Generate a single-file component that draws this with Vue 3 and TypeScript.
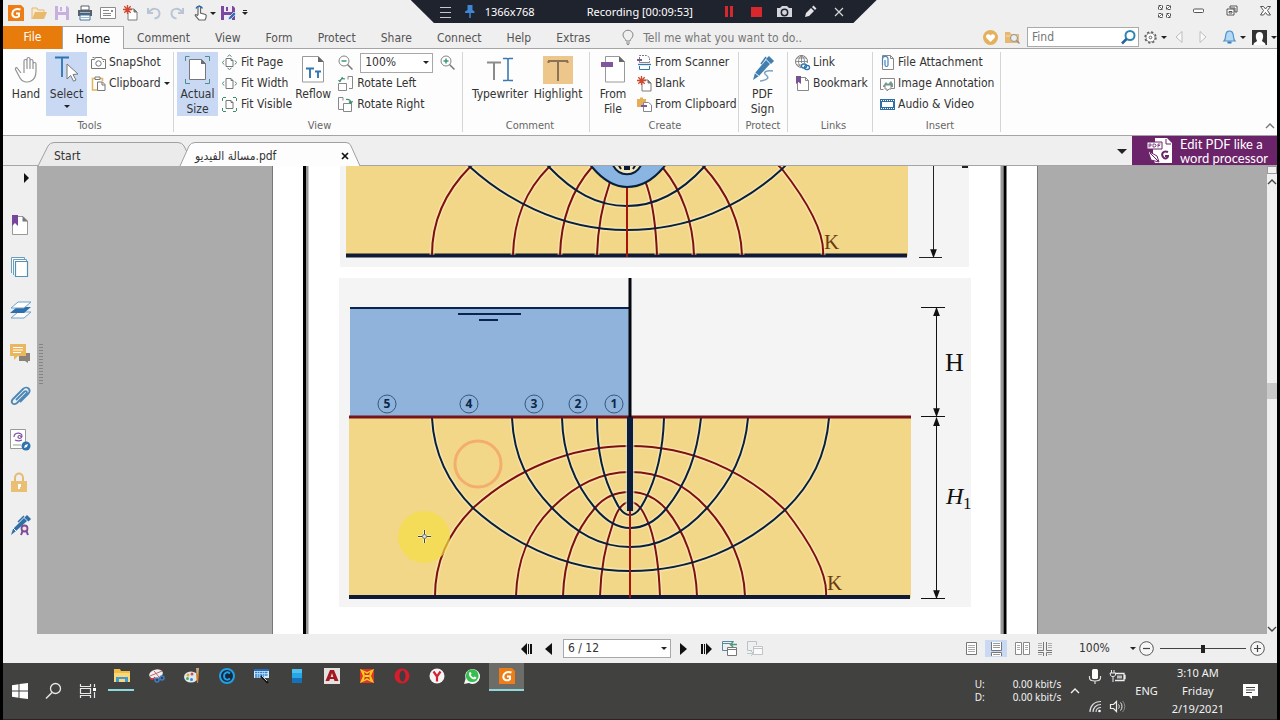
<script setup lang="ts">
import { h, ref } from 'vue'

const icons: Record<string, string> = {
  logo: '<path d="M0 0h13l3 3v13H0z" fill="#ee7d16"/><path d="M12.500 4.500C8 3 4.500 5 4.300 8.500S8 13.500 11 11.200V8.500H8" fill="none" stroke="#fff" stroke-width="2"/>',
  open: '<path d="M1 14V3h5l1 2h6v3" fill="#f7ead0" stroke="#e0b878"/><path d="M1 14l3-7h12l-3 7z" fill="#e9b96e"/>',
  save: '<path d="M1 1h12l2 2v12H1z" fill="#c6b0dc"/><path d="M4 1h8v6H4zM4 10h8v5H4z" fill="#f3eef8"/><path d="M6 2h2v4H6z" fill="#c6b0dc"/>',
  print: '<path d="M4 1h8v4H4z" fill="#fff" stroke="#58606a"/><path d="M1 5h14v6H1z" fill="#58606a"/><path d="M3 10h10v5H3z" fill="#fff" stroke="#3c75a8"/><path d="M4 12.500h8M3 7.500h10" stroke="#9eb7cc"/>',
  mail: '<path d="M.5 2.500h15v11H.5z" fill="#fff" stroke="#8b8b8b"/><path d="M3 5.500h6M3 8.500h8M3 10.500h8" stroke="#888"/><path d="M11 5h2v2h-2z" fill="#888"/>',
  newdoc: '<path d="M5 4h6l3 3v8H5z" fill="#fff" stroke="#7c7c7c"/><path d="M11 4v3h3" fill="#777" stroke="#777"/><path d="M4.500 0v9M0 4.500h9M1.300 1.300l6.400 6.400M7.700 1.300L1.300 7.700" stroke="#d0482f" stroke-width="1.300"/>',
  undo: '<path d="M2 3v5h5M2.500 8C6 2 13 3 13.500 8c.2 3-2 5-5 5.500" fill="none" stroke="#b9c5d4" stroke-width="2"/>',
  redo: '<path d="M14 3v5H9M13.500 8C10 2 3 3 2.500 8c-.2 3 2 5 5 5.500" fill="none" stroke="#b9c5d4" stroke-width="2"/>',
  touch: '<path d="M6 10V2.500c0-1.800 2.500-1.800 2.500 0V8l5 1.500c1 .5 1 1.500.5 3L13 15H7l-3.500-4c-1-1.500 1-2 2.500 0" fill="#fff" stroke="#666" stroke-width="1.200"/><path d="M4 3.500a3.500 3.500 0 0 1 6.500 0" fill="none" stroke="#2d6ea8" stroke-width="1.500"/>',
  saveedit: '<path d="M1 1h12l2 2v12H1z" fill="#7b4aa0"/><path d="M4 1h8v6H4zM4 10h8v5H4z" fill="#f0eaf5"/><path d="M6 2h2v4H6z" fill="#7b4aa0"/><path d="M8 15l1-3 5-5 2 2-5 5z" fill="#2f73b5" stroke="#fff" stroke-width=".6"/>',
  menu: '<path d="M0 1.500h11M0 6.500h11M0 11.500h11" stroke="#c8c9cc" stroke-width="1"/>',
  pin: '<path d="M2.500 0h5v5l2 1.500V8H0V6.500L2.500 5z" fill="#3d87d4"/><path d="M5 8v5" stroke="#3d87d4" stroke-width="1.500"/>',
  camera: '<path d="M0 3h3l2-2h5l2 2h3v9H0z" fill="#d5d5de"/><circle cx="7.500" cy="7.500" r="3.200" fill="#d5d5de" stroke="#20242f" stroke-width="1.500"/>',
  pencil: '<path d="M1 12l1-4 5-5 3 3-5 5zM8 2l1.500-1.500 3 3L11 5z" fill="#e3e3e8"/>',
  close: '<path d="M1 1l8 8M9 1L1 9" stroke="#d6d6da" stroke-width="1.200"/>',
  tabx: '<path d="M1 1l6 6M7 1L1 7" stroke="#111" stroke-width="1.700"/>',
  expand: '<path d="M.5 .5h4v4h-4zM8.500 .5h4v4h-4zM.5 8.500h4v4h-4zM8.500 8.500h4v4h-4z" fill="#fff" stroke="#555" stroke-dasharray="3 1"/><path d="M1 1l3 3M12 1L9 4M1 12l3-3M12 12L9 9" stroke="#777"/>',
  minimize: '<rect x=".5" y="1" width="10" height="3.500" rx="1" fill="#fff" stroke="#555"/>',
  restore: '<path d="M4 1h7v6H9V3H4z" fill="#fff" stroke="#555"/><path d="M1 4h7v6H1z" fill="#fff" stroke="#555"/><path d="M3 6.500h3v1.500H3z" fill="none" stroke="#555"/>',
  winclose: '<path d="M.5 .5h3L5.500 3l2-2.500h3L7.500 4.500l3 4.500h-3l-2-2.500-2 2.500h-3l3-4.500z" fill="#fff" stroke="#555"/>',
  bulb: '<path d="M4 10c0-2-3-3-3-6a4.700 4.500 0 0 1 10 0c0 3-3 4-3 6zM4 12h4M5 13.500h2" fill="none" stroke="#858585"/>',
  heart: '<circle cx="7.500" cy="7.500" r="7.500" fill="#e5b05c"/><path d="M7.500 12L3.500 8c-2-3 2-5.500 4-2.500 2-3 6-.5 4 2.500z" fill="#fff"/>',
  foldersearch: '<path d="M0 2h5l1 2h8v9H0z" fill="#e8b871"/><path d="M1 6h12" stroke="#f6dfb8"/><circle cx="9" cy="8" r="3.500" fill="#e9eef0" stroke="#98908a"/><path d="M11.500 10.500l3 3" stroke="#98908a" stroke-width="1.500"/>',
  findglass: '<circle cx="9" cy="5.500" r="4.500" fill="none" stroke="#2b86b4" stroke-width="2"/><path d="M5.500 9L1 13.500" stroke="#2b5f9e" stroke-width="2.500"/>',
  gear: '<circle cx="6.500" cy="6.500" r="5.300" fill="#fff" stroke="#606060" stroke-width="1.800" stroke-dasharray="2.160 2"/><circle cx="6.500" cy="6.500" r="4.500" fill="#fff" stroke="#808080"/><circle cx="6.500" cy="6.500" r="1.300" fill="none" stroke="#606060"/>',
  triLeft: '<path d="M7 .5v11L1 6z" fill="#fafafa" stroke="#bdbdbd"/>',
  triRight: '<path d="M1 .5v11L7 6z" fill="#fafafa" stroke="#bdbdbd"/>',
  bell: '<path d="M1 11c2-2 1-4 2-7 .7-4 6.300-4 7 0 1 3 0 5 2 7z" fill="#b5d8f3" stroke="#4e94d0" stroke-width="1.200"/><path d="M4.500 12.500h4" stroke="#3878b8" stroke-width="2"/>',
  user: '<path d="M0 0h15v15H0z" fill="#333"/><path d="M1.500 15c0-3 3-2.500 3.500-4.500C3 7 3.500 2 7.500 2S12 7 10 10.500c.5 2 3.500 1.500 3.500 4.500z" fill="#fff"/>',
  hand: '<path d="M6 17L2.500 12.500c-1-1.500-2.500-.5-2 1L5 22c2 4 7 5 11 3 4-2 5-6 5-10V8c0-2-3-2-3 0v5V5c0-2-3-2-3 0v8V3c0-2-3-2-3 0v10V5c0-2-3-2-3 0v12" transform="translate(1 0)" fill="#fff" stroke="#929292" stroke-width="1.200"/>',
  select: '<path d="M0 1.500h14M7 1v20" stroke="#2c74b4" stroke-width="1.800" fill="none"/><path d="M12 8l11 10-5 .5 3 5.500-2.500 1.200-2.800-5.700-3.700 3.500z" fill="#fff" stroke="#777"/>',
  snapshot: '<path d="M.5 4.500h3l1-2h6l1 2h3v9H.5z" fill="#fff" stroke="#777"/><circle cx="7.500" cy="8.500" r="2.700" fill="none" stroke="#777"/><path d="M1.500 2.500h2M12 6.500h1" stroke="#777"/>',
  clipboard: '<path d="M8 14H1.500V2.500h10V5" fill="#fff" stroke="#e3b45b" stroke-width="1.500"/><path d="M4 3.500V1h5v2.500z" fill="#fff" stroke="#777"/><path d="M6.500 6h5l2.500 2.500V14.500H6.500zM11 6v3h3" fill="#fff" stroke="#777"/>',
  actual: '<path d="M.5 5V.5h4M20 .5h4.500V5M24.500 23v4.500H20M5 27.500H.5V23" fill="none" stroke="#4b8f8c"/><path d="M4.500 3.500h12l4 4v16h-16z" fill="#fff" stroke="#777"/><path d="M16 3l5 5h-5z" fill="#6e6e6e"/>',
  fitpage: '<path d="M4 3.500h5l2 2v6H4zM9 3.500v2h2" fill="#fff" stroke="#777"/><path d="M5.500 1.500l2-1.500 2 1.500M5.500 13l2 1.500 2-1.500M2 5.500L.5 7.500 2 9.500M13 5.500l1.500 2-1.500 2" fill="none" stroke="#3f8f6b"/>',
  fitwidth: '<path d="M4 2.500h5l2 2v8H4zM9 2.500v2h2" fill="#fff" stroke="#777"/><path d="M2 5.500L.5 7.500 2 9.500M13 5.500l1.500 2-1.500 2" fill="none" stroke="#3f8f6b"/>',
  fitvisible: '<path d="M4 3.500h5l2 2v6H4zM9 3.500v2h2" fill="#fff" stroke="#777"/><path d="M.5 4V.5H4M11 .5h3.500V4M14.500 11v3.500H11M4 14.500H.5V11" fill="none" stroke="#3f8f6b" stroke-dasharray="3 1"/>',
  reflow: '<path d="M.5 .5H16l5.500 5.500v20H.5z" fill="#fff" stroke="#999"/><path d="M16 0l6 6h-6z" fill="#666"/><path d="M4 12.500h8M8 12v10M13 15.500h6M16 15v7" stroke="#3577ad" stroke-width="1.900"/>',
  zoomout: '<circle cx="6" cy="6" r="5" fill="#fff" stroke="#858585"/><path d="M9.500 9.500l5 5" stroke="#777" stroke-width="1.500"/><path d="M3.500 6h5" stroke="#3d967c" stroke-width="1.500"/>',
  zoomin: '<circle cx="6" cy="6" r="5" fill="#fff" stroke="#858585"/><path d="M9.500 9.500l5 5" stroke="#777" stroke-width="1.500"/><path d="M3.500 6h5M6 3.500v5" stroke="#3d967c" stroke-width="1.500"/>',
  rotleft: '<path d="M.5 7.500h8v7h-8z" fill="#fff" stroke="#888"/><path d="M10 3.500V.5h4.500v12H11" fill="none" stroke="#888"/><path d="M2 6C2 3 4 2 7 3M4.500 1L2 5.500M2 6L.5 4" fill="none" stroke="#3f8f6b" stroke-width="1.200"/>',
  rotright: '<path d="M5 12.500H.5V.5H5v3" fill="none" stroke="#888"/><path d="M5.500 6.500h8v8h-8z" fill="#fff" stroke="#888"/><path d="M8 2.500c3-.5 5 .5 5 3.500M11 4.500l2 2 1.500-2.500" fill="none" stroke="#3f8f6b" stroke-width="1.200"/>',
  typewriter: '<path d="M0 6.500h14M7 6v18" stroke="#8b8b8b" stroke-width="2"/><path d="M16 2.500h4c1 0 1 1 1 1 0-1 1-1 1-1h4M16 24.500h4c1 0 1-1 1-1 0 1 1 1 1 1h4M21 3v21" fill="none" stroke="#3a7ab0" stroke-width="1.600"/>',
  highlight: '<path d="M0 0h30v28H0z" fill="#ecc68a"/><path d="M5 5h20M15 5v20M5.500 5v2M24.500 5v2" stroke="#8a7257" stroke-width="2" fill="none"/>',
  fromfile: '<path d="M4.500 .5H18l5.500 5.500v20h-19z" fill="#fff" stroke="#999"/><path d="M18 0l6 6h-6z" fill="#666"/><path d="M0 6h12v5H0z" fill="#8154a0"/>',
  scanner: '<path d="M2.500 4V.5h7l3 2V5" fill="none" stroke="#777" stroke-dasharray="2 1"/><path d="M0 4h5v2H0z" fill="#8154a0"/><path d="M2.500 6v1.500h10V6" fill="none" stroke="#888"/><path d="M1 9.500h13" stroke="#3577ad" stroke-width="1.300"/><path d="M2.500 11v3.500h10V11" fill="none" stroke="#3577ad"/>',
  fromclip: '<path d="M0 2h3V.5h3V2h3v8H0z" fill="#e5ae57"/><path d="M6.500 5.500h5l3 2.500v6.500h-8z" fill="#fff" stroke="#888"/><path d="M4 8h6v2H4z" fill="#8154a0"/>',
  pdfsign: '<path d="M2 24l2-7L15 4l4 4L8 20z" fill="#417fb1"/><path d="M16 3l2-2 4 4-2 2zM10 8L15 1" stroke="#417fb1" fill="#417fb1" stroke-width="1.500"/><path d="M3 16l6 5" stroke="#fff"/><path d="M22 15c-6-1-11 1-7 4s1 5-6 6" fill="none" stroke="#79a2c7" stroke-width="1.500"/>',
  link: '<circle cx="6.500" cy="6.500" r="6" fill="#fff" stroke="#777"/><path d="M.5 6.500h12M6.500 .5v12M2 3h9M2 10h9M6.500 .5c-4 3-4 9 0 12M6.500 .5c4 3 4 9 0 12" fill="none" stroke="#777" stroke-width=".8"/><path d="M6 8h9v7H6z" fill="#fff"/><rect x="6.500" y="9" width="5" height="4" rx="2" fill="none" stroke="#2f73ae" stroke-width="1.300"/><rect x="9.500" y="10.500" width="5" height="4" rx="2" fill="none" stroke="#2f73ae" stroke-width="1.300"/>',
  bookmark: '<path d="M2.500 1.500h8l3 3v10h-11zM10.500 1.500v3h3" fill="#fff" stroke="#888"/><path d="M1 0h5v8L3.500 6 1 8z" fill="#795092"/>',
  fileatt: '<path d="M2.500 .5h8l3 3v11h-11zM10.500 .5v3h3" fill="#fff" stroke="#888"/><path d="M5 5v5c0 2 3 2 3 0V4C8 .5 2.500 .5 2.500 4v6" fill="none" stroke="#4783b5" stroke-width="1.200"/>',
  imgatt: '<path d="M.5 2.500h14v10H9M.5 2.500v11h3" fill="#fff" stroke="#888"/><path d="M3 10l3-4 2 2 3-3 2 3v3H3z" fill="#6aa08a"/><path d="M5 9h6v4H9l-2 2v-2H5z" fill="#fff" stroke="#888"/>',
  video: '<path d="M0 2h15v11H0z" fill="#2f6da5"/><path d="M2 5h11v5H2z" fill="#fff"/><path d="M1 3.500h13M1 11.500h13" stroke="#fff" stroke-dasharray="1 1"/>',
  chevup: '<path d="M1 5l4-4 4 4" fill="none" stroke="currentColor" stroke-width="1.400"/>',
  chevdown: '<path d="M1 1l4 4 4-4" fill="none" stroke="currentColor" stroke-width="1.400"/>',
  promo: '<path d="M8 0h12l5 5v20H8l-2-4V9H8z" fill="#fff"/><path d="M0 4h15v7H0z" fill="#fff" stroke="#6b2469"/><path d="M19 1v5h5" fill="none" stroke="#6b2469"/><path d="M2 9.500V6h2v2H2M6 6h2l1 1v1L8 9H6zM11 9.500V6h2.500M11 7.500h2" fill="none" stroke="#6b2469" stroke-width=".8"/><path d="M21 14c-5-2-7 2-5 5s5 1 5-1h-3" fill="none" stroke="#6b2469" stroke-width="2"/><path d="M1 13l9 5 2 6-8-2z" fill="#fff" stroke="#6b2469"/><path d="M3 15l8 8" stroke="#6b2469"/>',
  sbBookmark: '<path d="M2.500 2.500H13L17.500 7v13.500h-15z" fill="#fff" stroke="#999"/><path d="M12.500 2l5.500 5.500h-5.500z" fill="#777"/><path d="M2 1h6v11L5 9l-3 3z" fill="#77469c"/>',
  sbPages: '<path d="M1.500 16V.5h13v2M3.500 18V2.500h13v2" fill="#fff" stroke="#6d9ebb"/><path d="M5.500 4.500h12v15h-12z" fill="#fff" stroke="#5590b4" stroke-width="1.200"/>',
  sbLayers: '<path d="M1 18l7-6h13l-7 6z" fill="#fff" stroke="#6fa0c8"/><path d="M0 13l7-6h14l-7 6z" fill="#2d6fac"/><path d="M1 8l7-6h13l-7 6z" fill="#fff" stroke="#6fa0c8"/>',
  sbComment: '<path d="M9 10h11v8h-2v2l-3-2H9z" fill="#8a8178"/><path d="M0 1h16v12H8l-4 4v-4H0z" fill="#eab75e"/><path d="M3 4.500h10M3 7h10M3 9.500h8" stroke="#fff"/>',
  sbClip: '<path d="M6 14l8-8c2-2 4 0 2 2l-9 9c-4 3-7-1-4-4L13 3c4-4 9 1 5 5l-8 8" fill="none" stroke="#4b87b8" stroke-width="1.800"/>',
  sbSign: '<path d="M.5 .5h15v19H.5z" fill="#fff" stroke="#999"/><path d="M4 8c0-5 8-5 8-1 0 3-4 3-4 1s3-2 3 0M5 11c2 1 5 1 7 0" fill="none" stroke="#8254a4" stroke-width="1.200"/><path d="M3 15h8v2H3z" fill="#c5d3c5"/><circle cx="16" cy="17" r="4.500" fill="#2f73ae"/><path d="M14 19l1-3 3-1-1 3z" fill="#fff"/>',
  sbLock: '<path d="M5 10V6c0-6 8-6 8 0v4" fill="none" stroke="#e5bb74" stroke-width="2"/><path d="M1 9h16v11H1z" fill="#eabf74"/><path d="M8 12h3v3H10v2H8z" fill="#fff"/>',
  sbPen: '<path d="M1 20l2-6L14 3l3 3L6 16z" fill="#2f6fa9"/><path d="M15 3l2-2 3 3-2 2M8 7l6-6" stroke="#2f6fa9" fill="#2f6fa9" stroke-width="1.500"/><path d="M3 13l4 4" stroke="#fff"/><path d="M11 20l2-5M18 20l-2-5" stroke="#7b4a9b" stroke-width="2"/><circle cx="14.500" cy="13.500" r="3" fill="#f1e6d4" stroke="#7b4a9b" stroke-width="1.800"/>',
  first: '<path d="M6 0v12L0 6zM7 1h1v10H7zM9 1h2v10H9z" fill="#111"/>',
  prev: '<path d="M7 0v12L0 6z" fill="#111"/>',
  next: '<path d="M0 0v12l7-6z" fill="#111"/>',
  last: '<path d="M5 0v12l6-6zM3 1h1v10H3zM0 1h2v10H0z" fill="#111"/>',
  navBack: '<path d="M5 9.500H.5v-9h11V1M.5 2.500h8" fill="none" stroke="#5d86a0"/><path d="M5.500 6.500h9v8h-9zM5.500 8.500h9" fill="#fff" stroke="#777"/><path d="M15 3.500H9M11 1L8.500 3.500 11 6" fill="none" stroke="#4a9a80" stroke-width="1.500"/>',
  navFwd: '<path d="M5 9.500H.5v-9h9V4" fill="none" stroke="#b9c3ca"/><path d="M6.500 5.500h9v8h-9zM6.500 7.500h9" fill="#fafafa" stroke="#c0c4c8"/><path d="M0 12.500h6M4 10l2.500 2.500L4 15" fill="none" stroke="#b0cfc0"/>',
  vSingle: '<path d="M.5 .5h10v12H.5z" fill="#fff" stroke="#777"/><path d="M2 3.500h7M2 5.500h7M2 7.500h7M2 9.500h7" stroke="#aaa"/>',
  vCont: '<path d="M.5 0v8.500h10V0M.5 14v-3.500h10V14" fill="#fff" stroke="#777"/><path d="M2 1.500h7M2 3.500h7M2 5.500h7M2 12.500h7" stroke="#999"/>',
  vFacing: '<path d="M.5 .5h6v12h-6zM8.500 .5h6v12h-6z" fill="#fff" stroke="#888"/><path d="M2 3.500h3M2 5.500h3M2 7.500h3M10 3.500h3M10 5.500h3M10 7.500h3" stroke="#aaa"/>',
  vContFacing: '<path d="M0 8.500h5.500V0M14 8.500H8.500V0M0 10.500h5.500V14M14 10.500H8.500V14" fill="none" stroke="#777"/><path d="M0 1.500h4M0 3.500h4M0 5.500h4M10 1.500h4M10 3.500h4M10 5.500h4M0 12.500h4M10 12.500h4" stroke="#b0b0b0"/>',
  minusC: '<circle cx="7.500" cy="7.500" r="6.800" fill="#f6f6f6" stroke="#555"/><path d="M4 7.500h7" stroke="#444" stroke-width="1.200"/>',
  plusC: '<circle cx="7.500" cy="7.500" r="6.800" fill="#f6f6f6" stroke="#555"/><path d="M4 7.500h7M7.500 4v7" stroke="#444" stroke-width="1.200"/>',
  windows: '<path d="M0 2.200l6.500-1v6.300H0zM7.500 1L16 0v7.500H7.500zM0 8.500h6.500v6.300l-6.500-1zM7.500 8.500H16V16l-8.500-1z" fill="#fff"/>',
  search: '<circle cx="9.500" cy="5.500" r="5" fill="none" stroke="#e8e8e8" stroke-width="1.300"/><path d="M6 9.500L0 15.500" stroke="#e8e8e8" stroke-width="1.500"/>',
  taskview: '<path d="M.5 0v2.500h10V0M.5 14v-2.500h10V14M.5 4.500h10v5H.5zM14.500 0v3M14.500 8v6" fill="none" stroke="#e8e8e8" stroke-width="1.200"/><path d="M13 4h3v3h-3z" fill="#fff"/>',
  explorer: '<path d="M0 1h6l1 2h9v11H0z" fill="#f1bd45"/><path d="M0 5h16v9H0z" fill="#fbd775"/><path d="M2 14V9h12v5h-3v-3H5v3z" fill="#3c9ad8"/>',
  snip: '<ellipse cx="7" cy="6" rx="7" ry="4.500" transform="rotate(-15 7 6)" fill="#eff0f2"/><path d="M1 8l12-5M5 3l5 6" stroke="#c86068" /><circle cx="8" cy="12" r="2" fill="none" stroke="#3d7fc5" stroke-width="1.500"/><circle cx="13" cy="10" r="2" fill="none" stroke="#3d7fc5" stroke-width="1.500"/><path d="M1 10c2 2 4 1 5-1" fill="none" stroke="#d13d45" stroke-width="1.500"/>',
  paint: '<ellipse cx="7" cy="9" rx="7" ry="5.500" fill="#dce9ed"/><circle cx="4" cy="7" r="1.500" fill="#e3a53f"/><circle cx="8" cy="6" r="1.500" fill="#d84e40"/><circle cx="3.500" cy="10.500" r="1.500" fill="#56a65a"/><circle cx="7.500" cy="11.500" r="1.500" fill="#3b83cc"/><path d="M12 6l1 9h1l1-9z" fill="#d67b25"/><path d="M12 0h3l-.5 6h-2z" fill="#c8a67a"/>',
  cee: '<circle cx="8" cy="8" r="7" fill="#16283a" stroke="#1fa0e8" stroke-width="2"/><path d="M11 5.500C8 3 5 5 5 8s3 5 6 2.500" fill="none" stroke="#1fa0e8" stroke-width="2"/>',
  keyboard: '<path d="M0 1h15v9H0z" fill="#d5e9f6"/><path d="M0 1h15v2H0z" fill="#1f6cc0"/><path d="M1 4.500h13M1 7h13M1 9h9" stroke="#2f85d1" stroke-width="1.500" stroke-dasharray="2 .5"/><path d="M7 8l7 7" stroke="#111" stroke-width="2"/><path d="M8 8l5 5" stroke="#ccc"/>',
  phone: '<path d="M3 1h10v14H3z" fill="#28a5e5"/><path d="M3 1h10v4H3z" fill="#4cc0f0"/><path d="M3 10h10v5H3z" fill="#1672b8"/>',
  autocad: '<path d="M0 0h16v16H0z" fill="#e5e1e1"/><path d="M1.500 13L6 2h4l4.500 11h-4l-.7-2H6l-.8 2z" fill="#a51820"/><path d="M8 5l1.300 4H6.700z" fill="#e5e1e1"/>',
  star: '<path d="M1 1h14v14H1z" fill="#e0342b"/><path d="M1 1l7 3 7-3-3 7 3 7-7-3-7 3 3-7z" fill="#f8c91b"/><path d="M5 4l3 2 3-2-1 4 1 4-3-2-3 2 1-4z" fill="#d33023"/><path d="M6 8h4" stroke="#ffd52b" stroke-width="2"/>',
  opera: '<circle cx="8" cy="8" r="7.500" fill="#d71c2b"/><ellipse cx="8.500" cy="8" rx="3" ry="5.500" fill="#3d3d3d"/>',
  yandex: '<circle cx="8" cy="8" r="7.500" fill="#f5f5f5"/><path d="M4.500 3.500L8 8.500l3.500-5M8 8v5.500" fill="none" stroke="#d42430" stroke-width="2.200"/>',
  whatsapp: '<path d="M0 16l1.500-5A7.500 7.500 0 1 1 5 15z" fill="#f5f5f5"/><circle cx="8.200" cy="7.700" r="6.400" fill="#35bf4f"/><path d="M5 5c1-2 2-1 2.500.7L6.800 7c.7 1.300 1.500 2 2.700 2.500l1-1c2 .5 2.500 1.300 1 2.500C8.500 12.500 4 8 5 5z" fill="#fff"/>',
  mic: '<rect x="3" y="0" width="6" height="10" rx="1.500" fill="#fff"/><path d="M.5 7v2c0 4 11 4 11 0V7M6 12v3" fill="none" stroke="#ddd" stroke-width="1.200"/>',
  battery: '<path d="M5 3.500h9v7H5M14 5.500h1v3h-1" fill="none" stroke="#eee" stroke-width="1.300"/><path d="M7 5.500h5v3H7z" fill="#bbb"/><path d="M1.500 0v3M4 0v3M0 3h5.500v2C5 7 .5 7 .5 5zM3 6v6" fill="none" stroke="#eee"/>',
  wifi: '<circle cx="10.500" cy="11" r="1.300" fill="#fff"/><path d="M1 12C1 6 5 1.500 12 1.500M4 12c0-4 3-7.500 8-7.500M7 12c0-3 2-4.500 5-4.500" fill="none" stroke="#ddd" stroke-width="1.200"/>',
  speaker: '<path d="M.5 4.500h3l3-3v10l-3-3h-3z" fill="none" stroke="#eee" stroke-width="1.200"/><path d="M8.500 4.500c1 1 1 3 0 4M10.500 2.500c2 2 2 6 0 8" fill="none" stroke="#eee"/><path d="M12.500 1c3 3 3 8 0 11" fill="none" stroke="#888"/>',
  notify: '<path d="M0 0h15v12H9v3l-3-3H0z" fill="#fff"/><path d="M3 3.500h9M3 6h9M3 8.500h6" stroke="#444"/>',
}

const Icon = (p: { name: string; w?: number; h?: number }) => {
  const w = p.w ?? 16
  const hh = p.h ?? w
  return h('svg', { width: w, height: hh, viewBox: `0 0 ${w} ${hh}`, 'aria-hidden': 'true', innerHTML: icons[p.name] })
}

const quick = [
  ['logo', 'Foxit'], ['open', 'Open'], ['save', 'Save'], ['print', 'Print'], ['mail', 'Email'],
  ['newdoc', 'New'], ['undo', 'Undo'], ['redo', 'Redo'], ['touch', 'Touch mode'],
]
const menus = ['Comment', 'View', 'Form', 'Protect', 'Share', 'Connect', 'Help', 'Extras']
const fits = [['fitpage', 'Fit Page'], ['fitwidth', 'Fit Width'], ['fitvisible', 'Fit Visible']]
const creates = [['scanner', 'From Scanner'], ['newdoc', 'Blank'], ['fromclip', 'From Clipboard']]
const links = [['link', 'Link'], ['bookmark', 'Bookmark']]
const inserts = [['fileatt', 'File Attachment'], ['imgatt', 'Image Annotation'], ['video', 'Audio & Video']]
const panels = [
  ['sbBookmark', 'Bookmarks'], ['sbPages', 'Pages'], ['sbLayers', 'Layers'], ['sbComment', 'Comments'],
  ['sbClip', 'Attachments'], ['sbSign', 'Signatures'], ['sbLock', 'Security'], ['sbPen', 'Digital signatures'],
]
const apps = [
  ['explorer', 'File Explorer'], ['snip', 'Snipping Tool'], ['paint', 'Paint'], ['cee', 'Browser'], ['keyboard', 'Keyboard'],
  ['phone', 'Phone'], ['autocad', 'AutoCAD'], ['star', 'Game'], ['opera', 'Opera'], ['yandex', 'Yandex'],
  ['whatsapp', 'WhatsApp'], ['logo', 'Foxit Reader'],
]
const labels = [
  { n: '5', x: 387 }, { n: '4', x: 469 }, { n: '3', x: 534 }, { n: '2', x: 578 }, { n: '1', x: 614 },
]
const flow = {
  outer: 'M432 418C434 455 449 484 473 508C505 537 560 571 630 571C692 571 745 547 785 510C812 484 826 455 829 418',
  middle: 'M512 418C514 458 528 483 552 508C576 533 600 547 630 547C660 547 686 531 707 508C732 480 745 453 748 418',
  inner: 'M562 418C563 455 574 483 595 508C606 521 617 528 630 528C644 528 655 522 666 509C687 483 697 455 701 418',
  core: 'M597 418C597 450 603 478 615 500C620 511 625 515 630 515C636 515 641 508 645 500C657 477 663 450 664 418',
}
const drops = [
  'M435 596C435 560 449 532 473 508C515 470 570 446 630 446C690 446 745 471 785 510C806 537 828 572 826 596',
  'M516 596C517 560 528 532 552 508C573 487 600 472 630 472C660 472 686 485 707 508C730 533 744 564 745 596',
  'M563 596C564 561 574 532 595 508C604 497 616 492 630 492C645 492 656 498 666 509C685 532 696 563 697 596',
  'M600 596C601 565 606 543 613 523C617 510 622 502 630 502C640 502 645 515 650 527C656 545 659 570 660 596',
]
const zoom = ref(50)
</script>

<template>
  <div class="screen">
    <header class="titlebar">
      <div class="quick">
        <button v-for="q in quick" :key="q[0]" :aria-label="q[1]"><Icon :name="q[0]" /></button>
        <i class="caret"></i>
        <button class="saveas" aria-label="Save as"><Icon name="saveedit" /></button>
        <i class="caret bar"></i>
      </div>
      <div class="recorder">
        <button aria-label="Menu"><Icon name="menu" :w="11" :h="12" /></button>
        <button class="pin" aria-label="Pin"><Icon name="pin" :w="10" :h="13" /></button>
        <span class="dim">1366x768</span>
        <span class="rec">Recording [00:09:53]</span>
        <button class="pause" aria-label="Pause"></button>
        <button class="stop" aria-label="Stop"></button>
        <button aria-label="Screenshot"><Icon name="camera" :w="15" :h="13" /></button>
        <button class="pen" aria-label="Draw"><Icon name="pencil" :w="13" :h="13" /></button>
        <button class="quit" aria-label="Close recorder"><Icon name="close" :w="10" /></button>
      </div>
      <div class="window">
        <button aria-label="Full screen"><Icon name="expand" :w="13" /></button>
        <button aria-label="Minimize"><Icon name="minimize" :w="11" :h="6" /></button>
        <button aria-label="Restore"><Icon name="restore" :w="12" /></button>
        <button aria-label="Close"><Icon name="winclose" :w="11" :h="10" /></button>
      </div>
    </header>

    <nav class="menubar">
      <button class="file">File</button>
      <button class="home">Home</button>
      <div class="menus">
        <button v-for="m in menus" :key="m">{{ m }}</button>
      </div>
      <button class="tell"><Icon name="bulb" :w="12" :h="15" />Tell me what you want to do..</button>
      <div class="tools">
        <button aria-label="Favourites"><Icon name="heart" :w="15" /></button>
        <button aria-label="Search folder"><Icon name="foldersearch" :w="15" /></button>
        <label class="find"><input type="text" placeholder="Find" aria-label="Find" /><Icon name="findglass" :w="15" /></label>
        <button aria-label="Settings"><Icon name="gear" :w="13" /></button>
        <i class="caret"></i>
        <button class="tri" aria-label="Previous result"><Icon name="triLeft" :w="8" :h="12" /></button>
        <button class="tri" aria-label="Next result"><Icon name="triRight" :w="8" :h="12" /></button>
        <button class="tri" aria-label="Notifications"><Icon name="bell" :w="13" :h="15" /></button>
        <i class="caret"></i>
        <button class="account" aria-label="Account"><Icon name="user" :w="15" /></button>
        <i class="caret"></i>
      </div>
    </nav>

    <section class="ribbon">
      <div class="group g-tools">
        <div class="body">
          <button class="big"><Icon name="hand" :w="24" :h="28" /><span>Hand</span></button>
          <button class="big on"><Icon name="select" :w="24" :h="28" /><span>Select</span><i class="caret"></i></button>
          <div class="rows">
            <button><Icon name="snapshot" :w="15" />SnapShot</button>
            <button><Icon name="clipboard" :w="15" />Clipboard<i class="caret"></i></button>
          </div>
        </div>
        <h2>Tools</h2>
      </div>
      <div class="group g-view">
        <div class="body">
          <button class="big on"><Icon name="actual" :w="25" :h="28" /><span>Actual<br />Size</span></button>
          <div class="rows">
            <button v-for="f in fits" :key="f[0]"><Icon :name="f[0]" :w="15" />{{ f[1] }}</button>
          </div>
          <button class="big reflow"><Icon name="reflow" :w="22" :h="28" /><span>Reflow</span></button>
          <div class="rows">
            <div class="zoomrow">
              <button aria-label="Zoom out"><Icon name="zoomout" :w="15" /></button>
              <span class="picker"><select aria-label="Zoom level"><option>100%</option></select><i class="caret"></i></span>
              <button aria-label="Zoom in"><Icon name="zoomin" :w="15" /></button>
            </div>
            <button><Icon name="rotleft" :w="15" />Rotate Left</button>
            <button><Icon name="rotright" :w="15" />Rotate Right</button>
          </div>
        </div>
        <h2>View</h2>
      </div>
      <div class="group g-comment">
        <div class="body">
          <button class="big"><Icon name="typewriter" :w="26" :h="28" /><span>Typewriter</span></button>
          <button class="big"><Icon name="highlight" :w="30" :h="28" /><span>Highlight</span></button>
        </div>
        <h2>Comment</h2>
      </div>
      <div class="group g-create">
        <div class="body">
          <button class="big"><Icon name="fromfile" :w="24" :h="28" /><span>From<br />File</span></button>
          <div class="rows">
            <button v-for="c in creates" :key="c[0]"><Icon :name="c[0]" :w="15" />{{ c[1] }}</button>
          </div>
        </div>
        <h2>Create</h2>
      </div>
      <div class="group g-protect">
        <div class="body">
          <button class="big"><Icon name="pdfsign" :w="24" :h="28" /><span>PDF<br />Sign</span></button>
        </div>
        <h2>Protect</h2>
      </div>
      <div class="group g-links">
        <div class="body">
          <div class="rows">
            <button v-for="l in links" :key="l[0]"><Icon :name="l[0]" :w="15" />{{ l[1] }}</button>
          </div>
        </div>
        <h2>Links</h2>
      </div>
      <div class="group g-insert">
        <div class="body">
          <div class="rows">
            <button v-for="n in inserts" :key="n[0]"><Icon :name="n[0]" :w="15" />{{ n[1] }}</button>
          </div>
        </div>
        <h2>Insert</h2>
      </div>
      <button class="collapse" aria-label="Collapse ribbon"><Icon name="chevup" :w="10" :h="6" /></button>
    </section>

    <div class="tabs">
      <div class="tab start">
        <svg width="156" height="24" viewBox="0 0 156 24"><path d="M0 24L10 4Q12 .5 16 .5H140Q144 .5 146 4L156 24" fill="#ebebeb" stroke="#a0a0a0" /></svg>
        <button>Start</button>
      </div>
      <div class="tab doc">
        <svg width="180" height="24" viewBox="0 0 180 24"><path d="M0 24L9 4Q11 .5 15 .5H166Q170 .5 171 4L180 24" fill="#fdfdfd" stroke="#a0a0a0" /></svg>
        <button>مسالة الفيديو.pdf</button>
        <button class="shut" aria-label="Close tab"><Icon name="tabx" :w="8" /></button>
      </div>
      <i class="caret wide"></i>
      <a class="promo" href="#"><Icon name="promo" :w="26" /><span>Edit PDF like a<br />word processor</span></a>
    </div>

    <main class="work">
      <aside class="side">
        <button class="arrow" aria-label="Expand panel"><i></i></button>
        <button v-for="p in panels" :key="p[0]" :aria-label="p[1]"><Icon :name="p[0]" :w="21" /></button>
      </aside>
      <div class="grip"></div>
      <div class="canvas">
        <svg class="page" width="766" height="468" viewBox="272 166 766 468" role="img" aria-label="Flow nets under a dam and a sheet pile">
          <defs>
            <marker id="tip" viewBox="0 0 8 8" refX="7" refY="4" markerWidth="9" markerHeight="9" markerUnits="userSpaceOnUse" orient="auto-start-reverse"><path d="M0 1l8 3-8 3z" fill="#111" /></marker>
            <g id="halo" fill="none" stroke="#fbf0c8" stroke-width="5" opacity=".5">
              <path v-for="d in drops" :key="d" :d="d" />
              <path :d="flow.outer" /><path :d="flow.middle" />
            </g>
            <g id="equi" fill="none" stroke="#7e100f" stroke-width="2">
              <path v-for="d in drops" :key="d" :d="d" />
            </g>
            <clipPath id="ground"><rect x="349" y="507" width="562" height="95" /></clipPath>
          </defs>
          <rect x="272" y="166" width="766" height="468" fill="#fff" />
          <path d="M272.500 166V634M1037.500 166V634" stroke="#777" />
          <path d="M307 166V634M1002 166V634" stroke="#999" stroke-width="3" />
          <path d="M304.500 166V634M1005 166V634" stroke="#000" stroke-width="3" />

          <rect x="340" y="166" width="629" height="101" fill="#f4f4f4" />
          <rect x="346" y="166" width="562" height="90" fill="#f3d788" />
          <path d="M346 255.500H907" stroke="#101a35" stroke-width="4" />
          <g transform="translate(-3 -341)" clip-path="url(#ground)">
            <use href="#halo" /><use href="#equi" />
            <g fill="none" stroke="#08203c" stroke-width="2">
              <path :d="flow.outer" /><path :d="flow.middle" />
              <path :d="flow.inner" fill="#8ab5e3" />
              <path d="M615 504C621 519 639 519 645 504" fill="#f4e5b8" />
            </g>
            <path d="M627 504h6v7h-6z" fill="#0b1a34" />
            <path d="M621 505l3 5M639 505l-3 5" stroke="#0b1a34" stroke-width="2" />
            <path d="M630 529V598" stroke="#a5140e" stroke-width="2" />
          </g>
          <path d="M933.500 166V257" stroke="#222" marker-end="url(#tip)" />
          <path d="M919 257.500H942" stroke="#222" />
          <path d="M962 167H968" stroke="#222" stroke-width="2" />
          <text x="824" y="249" class="kay">K</text>

          <rect x="339" y="278" width="632" height="329" fill="#f4f4f4" />
          <rect x="350" y="307" width="279" height="110" fill="#8fb3da" />
          <path d="M350 308H629M458 314H521M479 320H498" stroke="#0a2350" stroke-width="2" />
          <g v-for="l in labels" :key="l.n">
            <circle :cx="l.x" cy="404" r="9" fill="none" stroke="#34597f" />
            <text :x="l.x" y="408" class="num">{{ l.n }}</text>
          </g>
          <rect x="349" y="417" width="562" height="181" fill="#f3d788" />
          <use href="#halo" />
          <path :d="flow.inner" fill="none" stroke="#fbf0c8" stroke-width="5" opacity=".5" />
          <path :d="flow.core" fill="none" stroke="#fbf0c8" stroke-width="5" opacity=".5" />
          <use href="#equi" />
          <g fill="none" stroke="#08203c" stroke-width="2">
            <path v-for="d in flow" :key="d" :d="d" />
          </g>
          <path d="M349 597H910" stroke="#101a35" stroke-width="4" />
          <path d="M349 417H911" stroke="#761519" stroke-width="3" />
          <path d="M630 511V598" stroke="#a5140e" stroke-width="2" />
          <path d="M630 278V417" stroke="#05080f" stroke-width="3" />
          <path d="M630 419V511" stroke="#d8dcc0" stroke-width="9" opacity=".7" />
          <path d="M630 417V511" stroke="#0b1c3c" stroke-width="6" />
          <g stroke="#111">
            <path d="M936.500 308V416" marker-start="url(#tip)" marker-end="url(#tip)" />
            <path d="M936.500 418V598" marker-start="url(#tip)" marker-end="url(#tip)" />
            <path d="M921 307.500H945M921 416.500H945M921 598.500H945" />
          </g>
          <text x="945" y="371" class="aitch">H</text>
          <text x="946" y="504" class="aitch it">H</text>
          <text x="963" y="509" class="sub">1</text>
          <text x="827" y="590" class="kay">K</text>
          <circle cx="478" cy="464" r="23" fill="none" stroke="#f3a468" stroke-width="3" opacity=".8" />
          <circle cx="424" cy="537" r="26" fill="#f4dd45" opacity=".7" />
          <path d="M418 536.500H431M424.500 530V543" stroke="#fff" stroke-width="3" opacity=".5" />
          <path d="M418 536.500H423M426 536.500H431M424.500 530V535M424.500 538V543" stroke="#444" />
          <circle cx="424.500" cy="536.500" r="2" fill="#ddd" stroke="#777" />
        </svg>
      </div>
      <div class="scroll">
        <i class="split"></i>
        <Icon name="chevup" :w="10" :h="6" />
        <i class="thumb"></i>
        <Icon name="chevdown" :w="10" :h="6" />
      </div>
    </main>

    <footer class="status">
      <div class="pager">
        <button aria-label="First page"><Icon name="first" :w="11" :h="12" /></button>
        <button aria-label="Previous page"><Icon name="prev" :w="7" :h="12" /></button>
        <span class="picker"><select aria-label="Page"><option>6 / 12</option></select><i class="caret"></i></span>
        <button aria-label="Next page"><Icon name="next" :w="7" :h="12" /></button>
        <button aria-label="Last page"><Icon name="last" :w="11" :h="12" /></button>
        <button aria-label="Previous view"><Icon name="navBack" :w="16" :h="15" /></button>
        <button aria-label="Next view"><Icon name="navFwd" :w="16" :h="15" /></button>
      </div>
      <div class="views">
        <button aria-label="Single page"><Icon name="vSingle" :w="11" :h="13" /></button>
        <button class="on" aria-label="Continuous"><Icon name="vCont" :w="11" :h="14" /></button>
        <button aria-label="Facing"><Icon name="vFacing" :w="15" :h="13" /></button>
        <button aria-label="Continuous facing"><Icon name="vContFacing" :w="14" :h="14" /></button>
      </div>
      <span class="picker pct"><select aria-label="Magnification"><option>100%</option></select><i class="caret"></i></span>
      <button aria-label="Smaller"><Icon name="minusC" :w="15" /></button>
      <input v-model="zoom" type="range" min="0" max="100" aria-label="Zoom" />
      <button aria-label="Larger"><Icon name="plusC" :w="15" /></button>
    </footer>

    <footer class="taskbar">
      <div class="sys">
        <button aria-label="Start"><Icon name="windows" /></button>
        <button aria-label="Search"><Icon name="search" /></button>
        <button aria-label="Task view"><Icon name="taskview" :w="16" :h="14" /></button>
      </div>
      <div class="apps">
        <button v-for="(a, i) in apps" :key="a[0]" :aria-label="a[1]" :class="{ open: i === 0, active: i === 11 }"><Icon :name="a[0]" /></button>
      </div>
      <div class="net"><span>U:</span><span>0.00 kbit/s</span><span>D:</span><span>0.00 kbit/s</span></div>
      <button class="more" aria-label="Hidden icons"><Icon name="chevup" :w="10" :h="6" /></button>
      <div class="tray">
        <Icon name="mic" :w="12" :h="15" /><Icon name="battery" :w="16" :h="13" />
        <Icon name="wifi" :w="13" :h="14" /><Icon name="speaker" :w="16" :h="13" />
      </div>
      <button class="lang">ENG</button>
      <time class="clock">3:10 AM<br />Friday<br />2/19/2021</time>
      <button class="notes" aria-label="Notifications"><Icon name="notify" :w="15" /></button>
    </footer>
  </div>
</template>

<style>
body { margin: 0; background: #000; }
</style>

<style scoped>
.screen {
  position: relative;
  display: flex;
  flex-direction: column;
  min-height: 100vh;
  box-sizing: border-box;
  padding: 0 3px;
  background: #000;
  color: #333;
  font: 12px/15px "DejaVu Sans Condensed", "Noto Sans", "DejaVu Sans", sans-serif;
}
svg { display: block; flex: none; overflow: visible; }
button, select, input { font: inherit; color: inherit; margin: 0; }
button { display: flex; align-items: center; padding: 0; border: 0; background: none; white-space: nowrap; }
.caret { display: block; flex: none; width: 0; height: 0; border: 3px solid transparent; border-top-color: #222; border-bottom: 0; }
.picker { position: relative; display: flex; align-items: center; }
.picker select { appearance: none; width: 100%; height: 100%; padding: 0 4px; border: 1px solid #a8a8a8; border-radius: 0; background: #fff; }
.picker .caret { position: absolute; right: 4px; }

.titlebar { position: relative; display: flex; justify-content: space-between; align-items: center; height: 26px; background: #efefef; }
.quick { display: flex; align-items: center; gap: 7px; padding-left: 5px; }
.quick .caret { margin-left: -5px; }
.quick .saveas { margin-left: -3px; }
.quick .caret.bar { margin-left: -1px; box-shadow: 0 -3px 0 -1px #222; }
.recorder {
  position: absolute; top: 0; left: 32%; display: flex; align-items: center; box-sizing: border-box;
  width: 466px; height: 23px; padding-left: 29px; background: #1f232e; color: #fff;
  clip-path: polygon(0 0, 100% 0, 95% 100%, 5% 100%); font: 11px/15px "Noto Sans", sans-serif; white-space: nowrap;
}
.recorder .pin { margin: 0 10px 0 14px; }
.recorder .dim { width: 102px; }
.recorder .rec { width: 138px; }
.recorder .pause { box-sizing: border-box; width: 8px; height: 11px; border: solid #d9282d; border-width: 0 3px; }
.recorder .stop { width: 11px; height: 10px; margin: 0 15px 0 18px; background: #d9282d; }
.recorder .pen { margin: 0 17px 0 12px; }
.window { display: flex; align-items: center; gap: 22px; padding: 0 6px 4px 0; }

.menubar { display: flex; align-items: center; height: 23px; box-sizing: border-box; border-bottom: 1px solid #a5a5a5; background: #efefef; color: #555; }
.menubar button { flex: none; }
.menubar .file { justify-content: center; width: 59px; height: 23px; background: #e77c0c; color: #fff; }
.menubar .home { justify-content: center; align-self: flex-start; width: 62px; height: 23px; box-sizing: border-box; border: 1px solid #a5a5a5; border-bottom: 0; background: #fdfdfd; color: #111; z-index: 1; font-size: 13px; }
.menus { display: flex; gap: 25px; margin-left: 13px; padding-top: 2px; }
.menubar .tell { gap: 9px; margin-left: 32px; padding-top: 2px; color: #777; }
.tools { display: flex; align-items: center; margin-left: auto; }
.tools button { margin-right: 7px; }
.tools .tri { margin: 0 8px; }
.find { position: relative; display: flex; align-items: center; margin-right: 5px; }
.find input { box-sizing: border-box; width: 112px; height: 20px; padding: 0 4px; border: 1px solid #aaa; background: #fff; }
.find svg { position: absolute; right: 3px; }
.tools button:has(+ .caret) { margin-right: 4px; }
.tools .account { margin-left: 6px; }

.ribbon { position: relative; display: flex; height: 87px; box-sizing: border-box; padding: 3px 0; border-bottom: 1px solid #a5a5a5; background: #fdfdfd; }
.group { display: flex; flex-direction: column; justify-content: space-between; box-sizing: border-box; border-right: 1px solid #d4d4d4; }
.body { display: flex; height: 64px; }
.group h2 { margin: 0; font-size: 11px; font-weight: 400; line-height: 13px; text-align: center; color: #666; }
.g-tools { width: 171px; padding-left: 3px; }
.g-view { width: 289px; padding-left: 3px; }
.g-comment { width: 127px; padding-left: 8px; }
.g-create { width: 149px; padding-left: 2px; }
.g-protect { width: 49px; padding-left: 3px; }
.g-links { width: 85px; padding-left: 7px; }
.g-insert { width: 128px; padding-left: 7px; }
.big { flex: none; flex-direction: column; width: 41px; height: 64px; padding-top: 4px; box-sizing: border-box; text-align: center; }
.big span { margin-top: 3px; }
.big .caret { margin-top: 3px; }
.big.on { background: #c9d9f3; }
.g-tools .big:first-child { width: 40px; }
.g-comment .big { width: 58px; }
.g-create .big { width: 42px; }
.big.reflow { width: 42px; }
.rows { display: flex; flex-direction: column; margin-left: 4px; }
.rows button { gap: 4px; height: 21px; }
.zoomrow { display: flex; align-items: center; gap: 7px; height: 21px; }
.zoomrow .picker { width: 73px; height: 20px; }
.g-tools .rows button { gap: 3px; }
.g-create .rows { margin-left: 3px; }
.g-create .rows button { gap: 3px; }
.g-links .rows, .g-insert .rows { margin-left: 0; }
.g-links .rows button, .g-insert .rows button { gap: 3px; }
.g-protect h2 { margin-left: -3px; }
.collapse { position: absolute; right: 2px; bottom: 6px; color: #777; }

.tabs { display: flex; align-items: flex-end; height: 30px; box-sizing: border-box; border-bottom: 1px solid #a5a5a5; background: #efefef; }
.tab { position: relative; display: flex; align-items: center; height: 23px; box-sizing: border-box; padding-top: 5px; }
.tab > svg { position: absolute; left: 0; top: 0; }
.tab button { position: relative; }
.start { width: 142px; margin-left: 35px; padding-left: 16px; }
.doc { width: 178px; padding-right: 9px; padding-left: 15px; justify-content: space-between; }
.caret.wide { border-width: 5px 5px 0; margin: 0 5px 11px auto; }
.promo { display: flex; align-items: center; gap: 7px; width: 145px; height: 29px; box-sizing: border-box; padding-left: 15px; background: #6b2469; color: #fff; font: 13px/14px Lato, sans-serif; text-decoration: none; white-space: nowrap; }

.work { display: flex; flex: 1; min-height: 468px; background: #ababab; overflow: hidden; }
.side { display: flex; flex-direction: column; align-items: center; gap: 22px; width: 34px; padding-top: 6px; box-sizing: border-box; background: #efefef; }
.side .arrow { width: 17px; height: 12px; margin: 0 0 8px; justify-content: flex-end; }
.side .arrow i { border: 5px solid transparent; border-left-color: #111; border-right: 0; }
.grip { align-self: flex-start; width: 4px; height: 42px; margin: 178px 0 0 2px; background: repeating-linear-gradient(#858585 0 1px, transparent 1px 3px); }
.canvas { display: flex; flex: 1; justify-content: center; background: #ababab; }
.kay { font: 21px "Liberation Serif", serif; fill: #6b3a10; }
.aitch { font: 26px "Liberation Serif", serif; fill: #111; }
.aitch.it { font-size: 24px; font-style: italic; }
.sub { font: 17px "Liberation Serif", serif; fill: #111; }
.num { font: bold 12px "Noto Sans", sans-serif; fill: #0d2748; text-anchor: middle; }
.scroll { display: flex; flex-direction: column; align-items: center; width: 10px; overflow: hidden; background: #efefef; color: #444; }
.scroll .split { width: 10px; height: 8px; margin-bottom: 5px; box-sizing: border-box; border: 1px solid #999; }
.scroll .thumb { width: 10px; height: 16px; margin: 198px 0 auto; background: #c9c9c9; }
.scroll svg:last-child { margin-bottom: 2px; }

.status { display: flex; align-items: center; height: 29px; box-sizing: border-box; padding: 0 12px 0 518px; background: #efefef; }
.pager { display: flex; align-items: center; gap: 11px; margin-right: auto; }
.pager .picker { width: 108px; height: 19px; }
.pager button:nth-child(2) { margin-left: 2px; }
.pager button:nth-child(4) { margin-left: -2px; }
.pager button:nth-child(5) { margin: 0 -1px 0 3px; }
.pager button:last-child { margin-left: -2px; }
.views { display: flex; align-items: center; gap: 8px; margin-right: 20px; }
.views button { justify-content: center; height: 17px; }
.views .on { width: 22px; background: #c9d9f3; }
.pct { width: 64px; height: 18px; margin-right: 3px; }
.pct select { padding: 0 7px; border: 0; background: none; }
.pct .caret { right: 0; }
.status input { appearance: none; width: 86px; height: 14px; margin: 0 4px 0 6px; background: linear-gradient(#444, #444) center / 100% 1px no-repeat; }
.status input::-webkit-slider-thumb { appearance: none; width: 4px; height: 8px; background: #222; }

.taskbar { display: flex; align-items: center; height: 57px; box-sizing: border-box; padding: 0 19px 0 9px; border-bottom: 1px solid #2a2224; background: #414140; color: #f2f2f2; font: 11px/18px "Noto Sans", sans-serif; }
.sys { display: flex; align-items: center; gap: 18px; margin-right: 8px; }
.apps { display: flex; align-self: flex-start; }
.apps button { justify-content: center; width: 35px; height: 28px; box-sizing: border-box; border-bottom: 2px solid transparent; }
.apps .open { position: relative; }
.apps .open::after { content: ""; position: absolute; left: 4px; right: 5px; bottom: -2px; height: 2px; background: #8fd8dc; }
.apps .active { border-color: #8fd8dc; background: #6c6c68; }
.net { display: grid; grid-template-columns: 38px auto; line-height: 13px; margin-left: auto; font-size: 10px; }
.more { margin: 0 9px; }
.tray { display: grid; grid-template-columns: 12px 16px; gap: 16px 9px; place-items: center; }
.lang { margin: 0 14px 0 9px; }
.clock { margin-right: 19px; text-align: center; }
</style>
